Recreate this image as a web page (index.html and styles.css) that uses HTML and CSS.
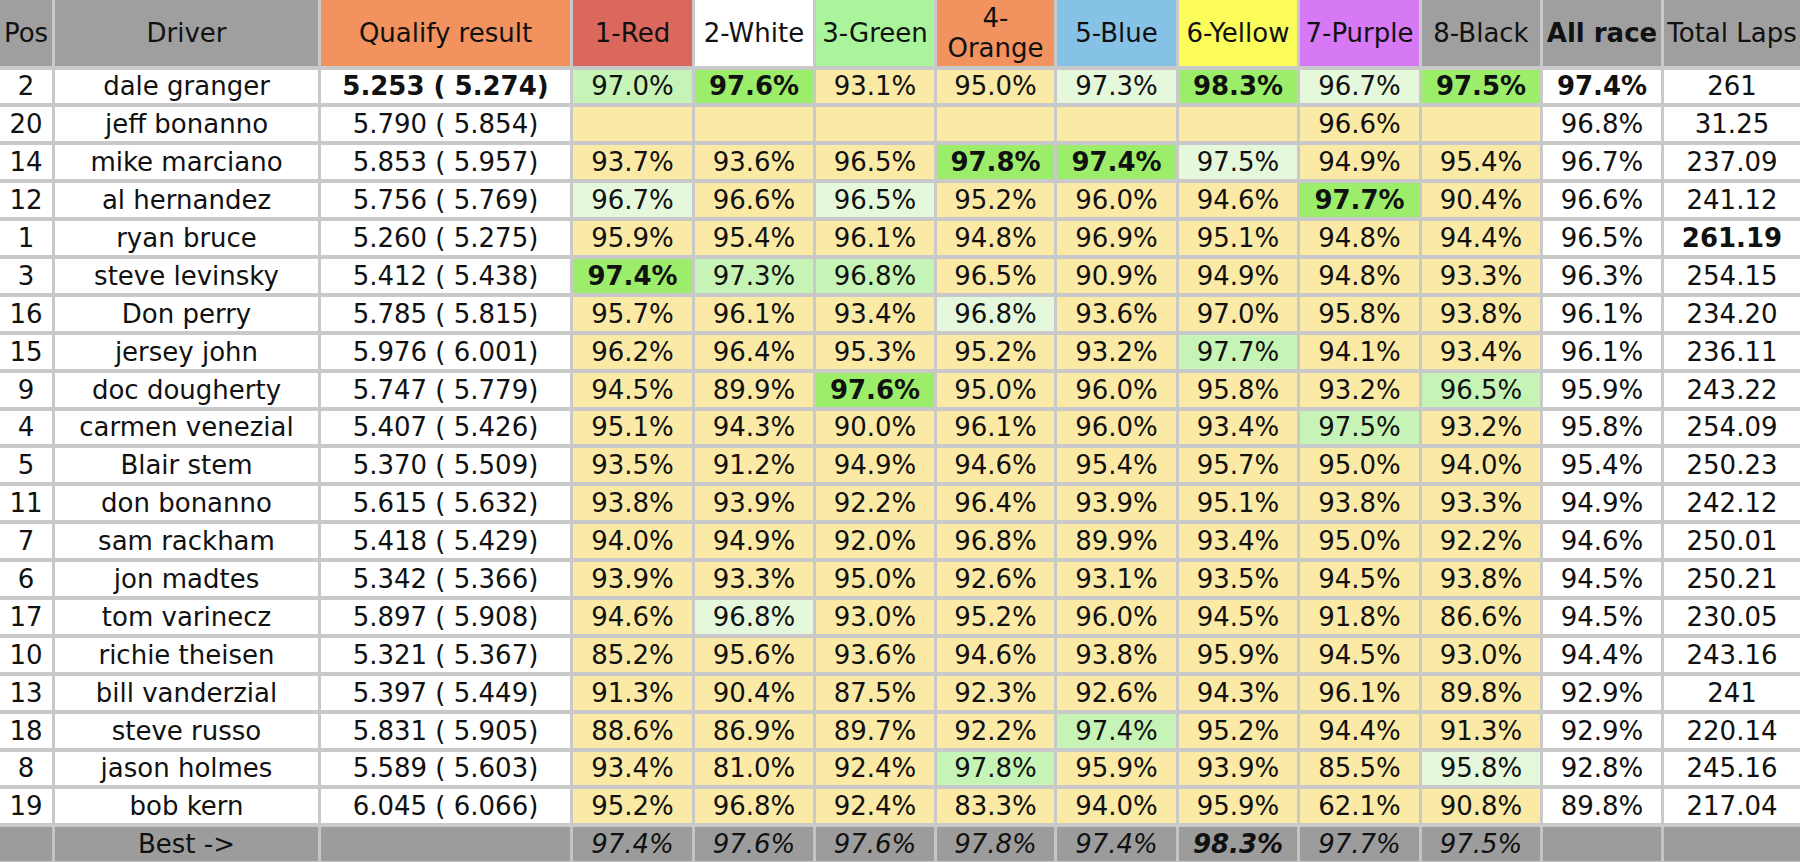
FILE: index.html
```html
<!DOCTYPE html>
<html>
<head>
<meta charset="utf-8">
<title>Race results</title>
<link rel="stylesheet" href="styles.css">
</head>
<body>
<table class="sheet">
  <colgroup>
    <col class="c-pos"><col class="c-driver"><col class="c-qual">
    <col class="c-1"><col class="c-2"><col class="c-3"><col class="c-4"><col class="c-5"><col class="c-6"><col class="c-7"><col class="c-8">
    <col class="c-all"><col class="c-laps">
  </colgroup>
  <thead>
    <tr>
      <th class="h-gray">Pos</th>
      <th class="h-gray">Driver</th>
      <th class="h-orange">Qualify result</th>
      <th class="h-red">1-Red</th>
      <th class="h-white">2-White</th>
      <th class="h-green">3-Green</th>
      <th class="h-orange wrap">4-<br>Orange</th>
      <th class="h-blue">5-Blue</th>
      <th class="h-yellow">6-Yellow</th>
      <th class="h-purple">7-Purple</th>
      <th class="h-gray">8-Black</th>
      <th class="h-gray bold">All race</th>
      <th class="h-gray last">Total Laps</th>
    </tr>
  </thead>
  <tbody>
    <tr><td>2</td><td>dale granger</td><td class="bold">5.253 ( 5.274)</td><td class="g">97.0%</td><td class="b">97.6%</td><td class="y">93.1%</td><td class="y">95.0%</td><td class="l">97.3%</td><td class="b">98.3%</td><td class="l">96.7%</td><td class="b">97.5%</td><td class="bold">97.4%</td><td class="last">261</td></tr>
    <tr><td>20</td><td>jeff bonanno</td><td>5.790 ( 5.854)</td><td class="y"></td><td class="y"></td><td class="y"></td><td class="y"></td><td class="y"></td><td class="y"></td><td class="y">96.6%</td><td class="y"></td><td>96.8%</td><td class="last">31.25</td></tr>
    <tr><td>14</td><td>mike marciano</td><td>5.853 ( 5.957)</td><td class="y">93.7%</td><td class="y">93.6%</td><td class="y">96.5%</td><td class="b">97.8%</td><td class="b">97.4%</td><td class="l">97.5%</td><td class="y">94.9%</td><td class="y">95.4%</td><td>96.7%</td><td class="last">237.09</td></tr>
    <tr><td>12</td><td>al hernandez</td><td>5.756 ( 5.769)</td><td class="l">96.7%</td><td class="y">96.6%</td><td class="l">96.5%</td><td class="y">95.2%</td><td class="y">96.0%</td><td class="y">94.6%</td><td class="b">97.7%</td><td class="y">90.4%</td><td>96.6%</td><td class="last">241.12</td></tr>
    <tr><td>1</td><td>ryan bruce</td><td>5.260 ( 5.275)</td><td class="y">95.9%</td><td class="y">95.4%</td><td class="y">96.1%</td><td class="y">94.8%</td><td class="y">96.9%</td><td class="y">95.1%</td><td class="y">94.8%</td><td class="y">94.4%</td><td>96.5%</td><td class="last bold">261.19</td></tr>
    <tr><td>3</td><td>steve levinsky</td><td>5.412 ( 5.438)</td><td class="b">97.4%</td><td class="g">97.3%</td><td class="g">96.8%</td><td class="y">96.5%</td><td class="y">90.9%</td><td class="y">94.9%</td><td class="y">94.8%</td><td class="y">93.3%</td><td>96.3%</td><td class="last">254.15</td></tr>
    <tr><td>16</td><td>Don perry</td><td>5.785 ( 5.815)</td><td class="y">95.7%</td><td class="y">96.1%</td><td class="y">93.4%</td><td class="l">96.8%</td><td class="y">93.6%</td><td class="y">97.0%</td><td class="y">95.8%</td><td class="y">93.8%</td><td>96.1%</td><td class="last">234.20</td></tr>
    <tr><td>15</td><td>jersey john</td><td>5.976 ( 6.001)</td><td class="y">96.2%</td><td class="y">96.4%</td><td class="y">95.3%</td><td class="y">95.2%</td><td class="y">93.2%</td><td class="g">97.7%</td><td class="y">94.1%</td><td class="y">93.4%</td><td>96.1%</td><td class="last">236.11</td></tr>
    <tr><td>9</td><td>doc dougherty</td><td>5.747 ( 5.779)</td><td class="y">94.5%</td><td class="y">89.9%</td><td class="b">97.6%</td><td class="y">95.0%</td><td class="y">96.0%</td><td class="y">95.8%</td><td class="y">93.2%</td><td class="g">96.5%</td><td>95.9%</td><td class="last">243.22</td></tr>
    <tr><td>4</td><td>carmen venezial</td><td>5.407 ( 5.426)</td><td class="y">95.1%</td><td class="y">94.3%</td><td class="y">90.0%</td><td class="y">96.1%</td><td class="y">96.0%</td><td class="y">93.4%</td><td class="g">97.5%</td><td class="y">93.2%</td><td>95.8%</td><td class="last">254.09</td></tr>
    <tr><td>5</td><td>Blair stem</td><td>5.370 ( 5.509)</td><td class="y">93.5%</td><td class="y">91.2%</td><td class="y">94.9%</td><td class="y">94.6%</td><td class="y">95.4%</td><td class="y">95.7%</td><td class="y">95.0%</td><td class="y">94.0%</td><td>95.4%</td><td class="last">250.23</td></tr>
    <tr><td>11</td><td>don bonanno</td><td>5.615 ( 5.632)</td><td class="y">93.8%</td><td class="y">93.9%</td><td class="y">92.2%</td><td class="y">96.4%</td><td class="y">93.9%</td><td class="y">95.1%</td><td class="y">93.8%</td><td class="y">93.3%</td><td>94.9%</td><td class="last">242.12</td></tr>
    <tr><td>7</td><td>sam rackham</td><td>5.418 ( 5.429)</td><td class="y">94.0%</td><td class="y">94.9%</td><td class="y">92.0%</td><td class="y">96.8%</td><td class="y">89.9%</td><td class="y">93.4%</td><td class="y">95.0%</td><td class="y">92.2%</td><td>94.6%</td><td class="last">250.01</td></tr>
    <tr><td>6</td><td>jon madtes</td><td>5.342 ( 5.366)</td><td class="y">93.9%</td><td class="y">93.3%</td><td class="y">95.0%</td><td class="y">92.6%</td><td class="y">93.1%</td><td class="y">93.5%</td><td class="y">94.5%</td><td class="y">93.8%</td><td>94.5%</td><td class="last">250.21</td></tr>
    <tr><td>17</td><td>tom varinecz</td><td>5.897 ( 5.908)</td><td class="y">94.6%</td><td class="l">96.8%</td><td class="y">93.0%</td><td class="y">95.2%</td><td class="y">96.0%</td><td class="y">94.5%</td><td class="y">91.8%</td><td class="y">86.6%</td><td>94.5%</td><td class="last">230.05</td></tr>
    <tr><td>10</td><td>richie theisen</td><td>5.321 ( 5.367)</td><td class="y">85.2%</td><td class="y">95.6%</td><td class="y">93.6%</td><td class="y">94.6%</td><td class="y">93.8%</td><td class="y">95.9%</td><td class="y">94.5%</td><td class="y">93.0%</td><td>94.4%</td><td class="last">243.16</td></tr>
    <tr><td>13</td><td>bill vanderzial</td><td>5.397 ( 5.449)</td><td class="y">91.3%</td><td class="y">90.4%</td><td class="y">87.5%</td><td class="y">92.3%</td><td class="y">92.6%</td><td class="y">94.3%</td><td class="y">96.1%</td><td class="y">89.8%</td><td>92.9%</td><td class="last">241</td></tr>
    <tr><td>18</td><td>steve russo</td><td>5.831 ( 5.905)</td><td class="y">88.6%</td><td class="y">86.9%</td><td class="y">89.7%</td><td class="y">92.2%</td><td class="g">97.4%</td><td class="y">95.2%</td><td class="y">94.4%</td><td class="y">91.3%</td><td>92.9%</td><td class="last">220.14</td></tr>
    <tr><td>8</td><td>jason holmes</td><td>5.589 ( 5.603)</td><td class="y">93.4%</td><td class="y">81.0%</td><td class="y">92.4%</td><td class="g">97.8%</td><td class="y">95.9%</td><td class="y">93.9%</td><td class="y">85.5%</td><td class="l">95.8%</td><td>92.8%</td><td class="last">245.16</td></tr>
    <tr><td>19</td><td>bob kern</td><td>6.045 ( 6.066)</td><td class="y">95.2%</td><td class="y">96.8%</td><td class="y">92.4%</td><td class="y">83.3%</td><td class="y">94.0%</td><td class="y">95.9%</td><td class="y">62.1%</td><td class="y">90.8%</td><td>89.8%</td><td class="last">217.04</td></tr>
    <tr class="best"><td></td><td>Best -&gt;</td><td></td><td class="it">97.4%</td><td class="it">97.6%</td><td class="it">97.6%</td><td class="it">97.8%</td><td class="it">97.4%</td><td class="it bold">98.3%</td><td class="it">97.7%</td><td class="it">97.5%</td><td></td><td class="last"></td></tr>
  </tbody>
</table>
</body>
</html>
```

FILE: styles.css
```css
html, body {
  margin: 0;
  padding: 0;
  background: #ffffff;
  overflow: hidden;
}

.sheet {
  border-collapse: separate;
  border-spacing: 0;
  table-layout: fixed;
  width: 1800px;
  font-family: "DejaVu Sans", Verdana, sans-serif;
  font-size: 26px;
  color: #111111;
}

.c-pos { width: 55px; }
.c-driver { width: 266px; }
.c-qual { width: 252px; }
.c-1 { width: 122px; }
.c-2 { width: 121px; }
.c-3 { width: 121px; }
.c-4 { width: 120px; }
.c-5 { width: 122px; }
.c-6 { width: 121px; }
.c-7 { width: 122px; }
.c-8 { width: 121px; }
.c-all { width: 121px; }
.c-laps { width: 136px; }

.sheet th,
.sheet td {
  border-right: 3px solid #c9c9c9;
  border-bottom: 4px solid #c9c9c9;
  padding: 0 1px;
  text-align: center;
  vertical-align: middle;
  white-space: nowrap;
  overflow: hidden;
  background: #ffffff;
}

.sheet th {
  height: 65.5px;
  font-weight: normal;
  line-height: 30px;
}

.sheet td {
  height: 33.9px;
  line-height: 30px;
}

.sheet .last {
  border-right: 0;
  padding: 0;
}

.sheet .bold { font-weight: bold; }

.sheet .h-gray { background: #9f9f9f; }
.sheet .h-orange { background: #f2925f; }
.sheet .h-red { background: #da685c; }
.sheet .h-white { background: #ffffff; }
.sheet .h-green { background: #aaf59c; }
.sheet .h-blue { background: #86c2e6; }
.sheet .h-yellow { background: #fcfc5b; }
.sheet .h-purple { background: #d778f4; }
.sheet .wrap { white-space: normal; }

.sheet .y { background: #fbe9a6; }
.sheet .l { background: #e5f8dc; }
.sheet .g { background: #c6f4b6; }
.sheet .b { background: #9cee6a; font-weight: bold; }

.sheet .best td {
  background: #9c9c9c;
  border-right-color: #c4c4c4;
}
.sheet .best .it { font-style: italic; }
```
